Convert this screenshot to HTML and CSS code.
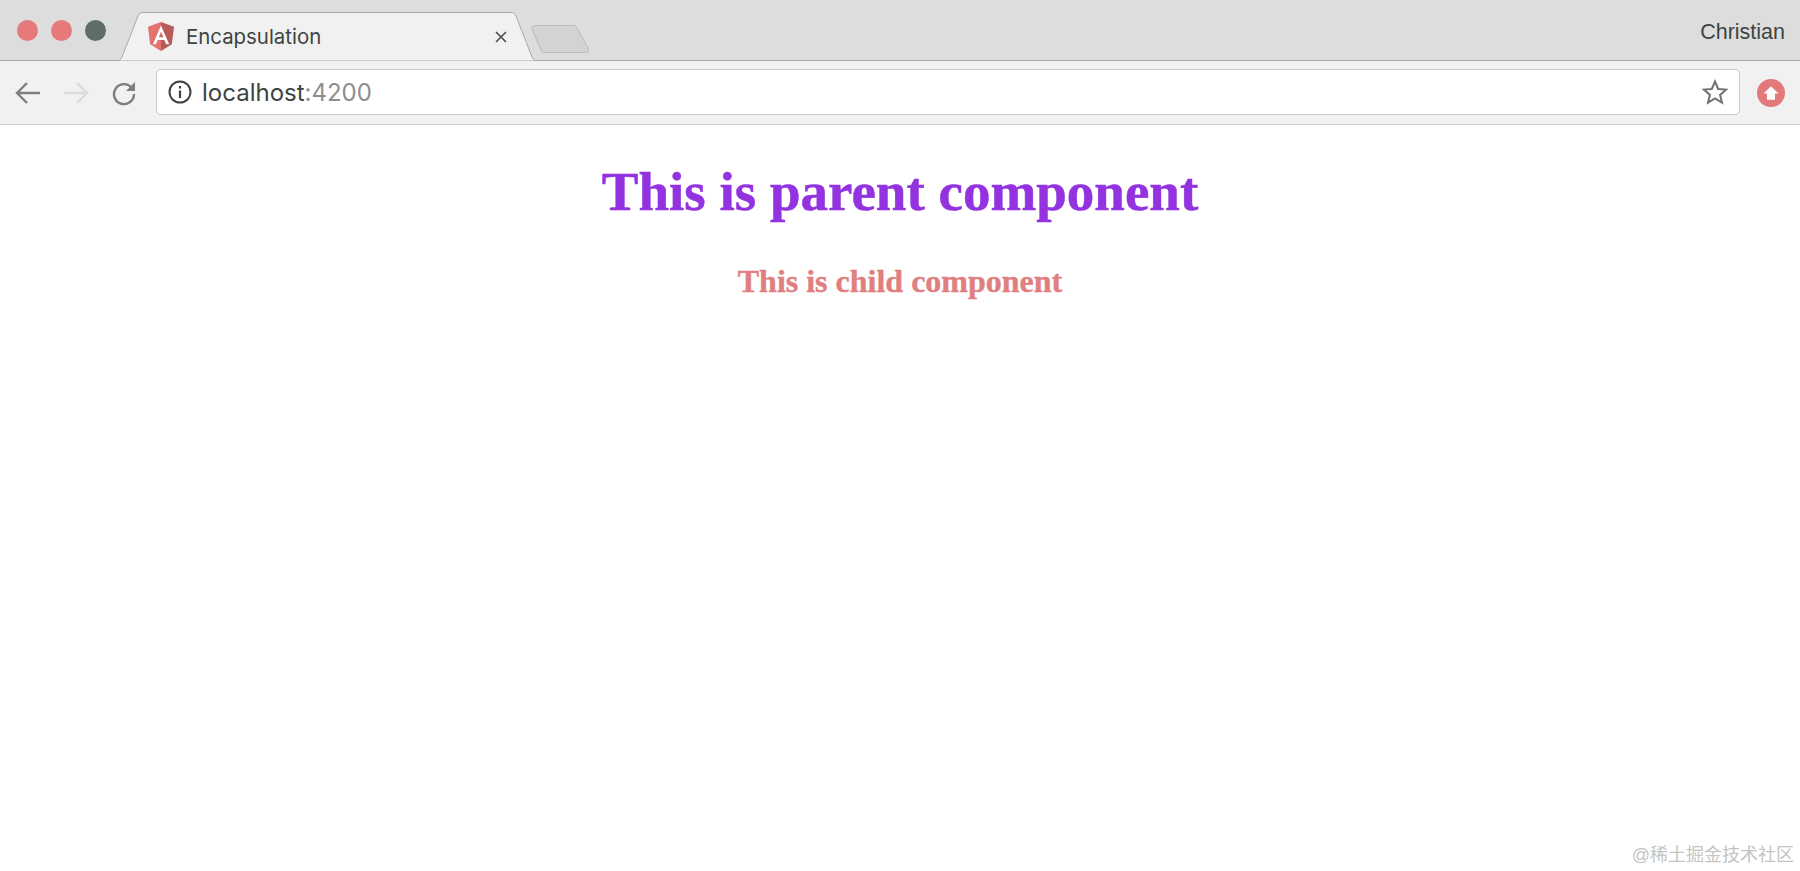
FILE: index.html
```html
<!DOCTYPE html>
<html lang="en">

<head>
    <meta charset="UTF-8">
    <meta name="viewport" content="width=device-width, initial-scale=1.0">
    <title>Encapsulation</title>
    <link rel="stylesheet" href="styles.css">
</head>

<body>

    <div class="titlebar">
        <div class="lights">
            <span class="light"></span>
            <span class="light"></span>
            <span class="light light-dark"></span>
        </div>
        <div class="tab">
            <svg class="tab-shape" width="424" height="49" viewBox="0 0 424 49">
                <path d="M7 48.5 C9 48.5 10 47 11 45 L27 4 C28 1.5 29 .5 32 .5 L400 .5 C403 .5 404 1.5 405 4 L421 45 C422 47 423 48.5 424 48.5" fill="#f1f1f1" stroke="#a9a9a9"/>
            </svg>
            <svg class="favicon" width="26" height="29" viewBox="0 0 27 30">
                <path d="M13.5 0 L0 5 L2.2 23 L13.5 30 Z" fill="#e2736f"/>
                <path d="M13.5 0 L27 5 L24.8 23 L13.5 30 Z" fill="#b85a57"/>
                <path d="M13.5 3.5 L5 23 H8.2 L10 18.6 H17 L18.8 23 H22 Z M11.2 15.8 L13.5 10 L15.8 15.8 Z" fill="#fff"/>
            </svg>
            <span class="tab-title">Encapsulation</span>
            <svg class="tab-close" width="14" height="14" viewBox="0 0 14 14">
                <path d="M2 2 L12 12 M12 2 L2 12" stroke="#454a48" stroke-width="1.5" fill="none"/>
            </svg>
        </div>
        <svg class="new-tab" width="58" height="28" viewBox="0 0 58 28">
            <path d="M4 .5 H42 C44 .5 45 1 46 3 L57 23 C58 26 57 27.5 55 27.5 H14 C12 27.5 11 27 10 25 L1 4 C0 2 2 .5 4 .5 Z" fill="#d5d2d6" stroke="#bdbabe"/>
        </svg>
        <span class="profile">Christian</span>
    </div>

    <div class="toolbar">
        <svg class="nav-icon" width="28" height="28" viewBox="0 0 28 28">
            <path d="M26 14 H3 M13 4 L3 14 L13 24" stroke="#7c7f7e" stroke-width="2.4" fill="none"/>
        </svg>
        <svg class="nav-icon" width="28" height="28" viewBox="0 0 28 28">
            <path d="M2 14 H25 M15 4 L25 14 L15 24" stroke="#dcdcdc" stroke-width="2.4" fill="none"/>
        </svg>
        <svg class="nav-icon" width="28" height="28" viewBox="0 0 28 28">
            <path d="M21.5 8.5 A10 10 0 1 0 24 15" stroke="#7c7f7e" stroke-width="2.4" fill="none"/>
            <path d="M25 3 V12 H16 Z" fill="#7c7f7e"/>
        </svg>
        <div class="omnibox">
            <svg class="info-icon" width="24" height="24" viewBox="0 0 24 24">
                <circle cx="12" cy="12" r="10.5" stroke="#3f4442" stroke-width="2" fill="none"/>
                <path d="M12 10.5 V18 M12 6 V8.5" stroke="#3f4442" stroke-width="2.2" fill="none"/>
            </svg>
            <span class="url">localhost<span class="url-port">:4200</span></span>
            <svg class="star" width="26" height="26" viewBox="0 0 26 26">
                <path d="M13 2.5 L16.2 10 L24.2 10.6 L18.1 15.9 L20 23.7 L13 19.5 L6 23.7 L7.9 15.9 L1.8 10.6 L9.8 10 Z" stroke="#6f7270" stroke-width="2" fill="none"/>
            </svg>
        </div>
        <div class="ext-icon">
            <svg width="16" height="16" viewBox="0 0 14 14">
                <path d="M7 1 L13.5 7.5 H10.5 V13 H3.5 V7.5 H.5 Z" fill="#fff"/>
            </svg>
        </div>
    </div>

    <div class="page">
        <h1>This is parent component</h1>
        <h2>This is child component</h2>
    </div>

    <span class="watermark">@稀土掘金技术社区</span>

</body>

</html>
```

FILE: styles.css
```css
body {
    margin: 0;
    height: 871px;
    overflow: hidden;
    background-color: white;
    font-family: "Liberation Sans", Arial, sans-serif;
    position: relative;
}

.titlebar {
    display: flex;
    align-items: flex-start;
    height: 60px;
    border-bottom: 1px solid #a8a8a8;
    background-color: #dddddd;
}

.lights {
    display: flex;
    gap: 13px;
    padding: 20px 0 0 17px;
    width: 96px;
}

.light {
    width: 21px;
    height: 21px;
    border-radius: 50%;
    background-color: #e67a7a;
}

.light-dark {
    background-color: #5f6d66;
}

.tab {
    position: relative;
    display: flex;
    align-items: center;
    width: 424px;
    height: 49px;
    margin: 12px 0 0 -2px;
}

.tab-shape {
    position: absolute;
    left: 0;
    top: 0;
}

.favicon,
.tab-title,
.tab-close {
    position: relative;
}

.favicon {
    margin-left: 37px;
}

.tab-title {
    margin-left: 12px;
    font-family: Inter, sans-serif;
    font-size: 20.4px;
    color: #3d4441;
}

.tab-close {
    margin-left: auto;
    margin-right: 27px;
}

.new-tab {
    margin: 25px 0 0 -4px;
}

.profile {
    margin: 20px 15px 0 auto;
    font-size: 21.5px;
    color: #3d4441;
}

.toolbar {
    display: flex;
    align-items: center;
    height: 63px;
    border-bottom: 1px solid #d0d0d0;
    background-color: #f1f1f1;
    padding-left: 14px;
    box-sizing: content-box;
}

.nav-icon {
    margin-right: 20px;
}

.omnibox {
    display: flex;
    align-items: center;
    width: 1584px;
    height: 46px;
    margin: -1px 0 0 -2px;
    padding: 0 11px 0 11px;
    box-sizing: border-box;
    background-color: white;
    border: 1px solid #c8c8c8;
    border-radius: 5px;
}

.info-icon {
    margin-right: 10px;
}

.url {
    font-family: Inter, sans-serif;
    font-size: 24px;
    color: #3d4441;
}

.url-port {
    color: #8e8e8e;
}

.star {
    margin-left: auto;
}

.ext-icon {
    display: flex;
    align-items: center;
    justify-content: center;
    width: 28px;
    height: 28px;
    margin-left: 17px;
    border-radius: 50%;
    background-color: #e27a7a;
}

.page {
    text-align: center;
    font-family: "Liberation Serif", "Times New Roman", serif;
}

.page h1 {
    margin: 0;
    padding-top: 36px;
    font-size: 55px;
    line-height: 62px;
    color: #9333e0;
    -webkit-text-stroke: 0.5px #9333e0;
}

.page h2 {
    margin: 0;
    padding-top: 40px;
    font-size: 32px;
    line-height: 36px;
    color: #e07f7f;
    -webkit-text-stroke: 0.4px #e07f7f;
}

.watermark {
    position: absolute;
    right: 6px;
    bottom: 5px;
    font-family: "Liberation Sans", "Noto Sans CJK SC", sans-serif;
    font-size: 18px;
    color: #c4c4c4;
}
```
